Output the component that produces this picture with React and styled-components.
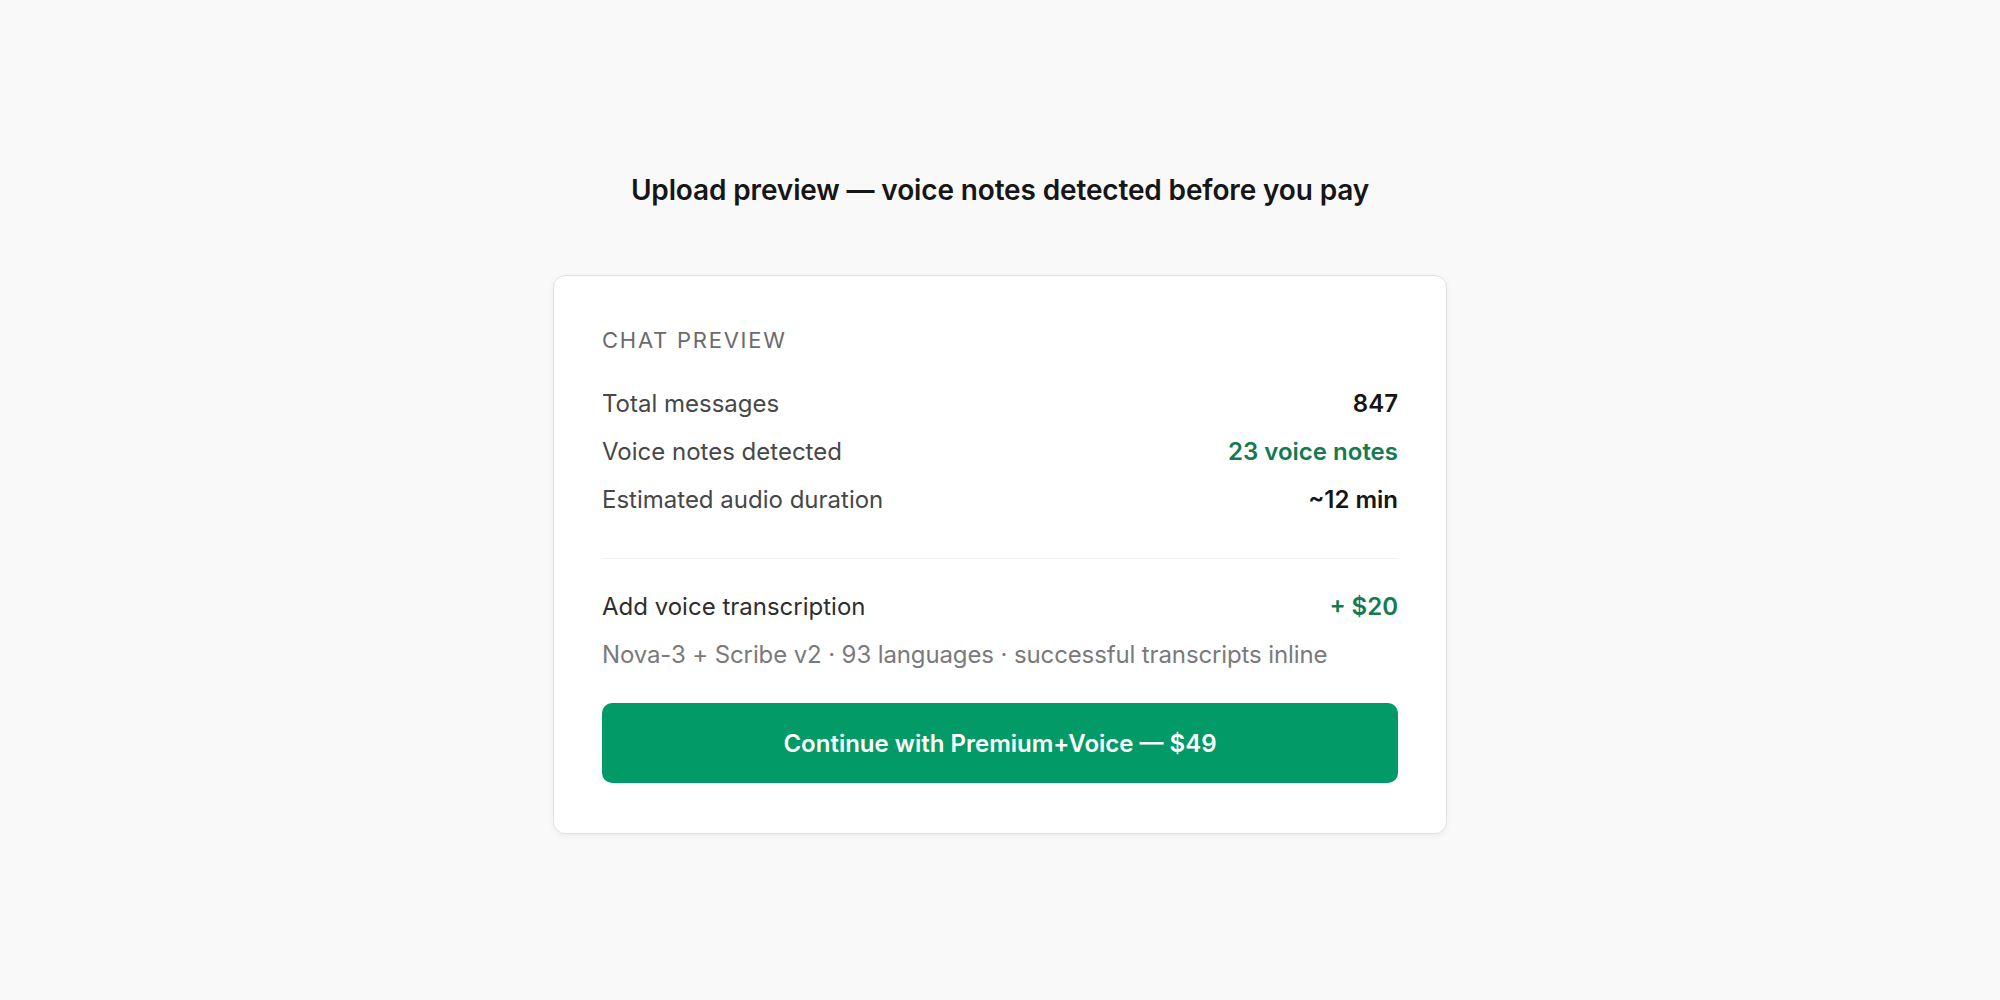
import React from "react";
import styled, { createGlobalStyle } from "styled-components";

const GlobalStyle = createGlobalStyle`
  html, body {
    margin: 0;
    padding: 0;
    background: #f9f9f9;
    font-family: Inter, "Noto Sans", "Liberation Sans", sans-serif;
    -webkit-font-smoothing: antialiased;
  }
`;

const Page = styled.main`
  min-height: 1000px;
  box-sizing: border-box;
  padding-top: 173px;
  display: flex;
  flex-direction: column;
  align-items: center;
`;

const Title = styled.h1`
  margin: 0 0 68px;
  font-size: 28px;
  line-height: 34px;
  font-weight: 600;
  color: #161616;
  letter-spacing: -0.005em;
`;

const Card = styled.section`
  width: 894px;
  box-sizing: border-box;
  background: #fff;
  border: 1px solid #e2e2e2;
  border-radius: 12px;
  box-shadow: 0 2px 6px rgba(0, 0, 0, 0.05);
  padding: 48px 48px 50px;
`;

const Eyebrow = styled.div`
  font-size: 22px;
  line-height: 33px;
  letter-spacing: 0.08em;
  text-transform: uppercase;
  color: #6b6b6b;
  margin-bottom: 29px;
`;

const Stats = styled.div`
  display: flex;
  flex-direction: column;
  gap: 12px;
  padding-bottom: 40px;
  border-bottom: 1px solid #f0f0f0;
`;

const Row = styled.div`
  display: flex;
  justify-content: space-between;
  align-items: baseline;
  font-size: 24px;
  line-height: 36px;
`;

const Label = styled.span`
  color: ${(p) => (p.strong ? "#2e2e2e" : "#474747")};
`;

const Value = styled.span`
  font-weight: 600;
  color: ${(p) => (p.accent ? "#157a52" : "#161616")};
`;

const Addon = styled.div`
  padding-top: 30px;
  display: flex;
  flex-direction: column;
  gap: 12px;
`;

const Note = styled.div`
  font-size: 24px;
  line-height: 36px;
  letter-spacing: -0.005em;
  color: #7a7a7a;
`;

const Button = styled.button`
  margin-top: 30px;
  width: 100%;
  height: 80px;
  border: none;
  border-radius: 10px;
  background: #029a66;
  color: #fff;
  font-family: inherit;
  font-size: 24px;
  font-weight: 600;
  cursor: pointer;
`;

const stats = [
  { label: "Total messages", value: "847" },
  { label: "Voice notes detected", value: "23 voice notes", accent: true },
  { label: "Estimated audio duration", value: "~12 min" },
];

export default function App() {
  return (
    <>
      <GlobalStyle />
      <Page>
        <Title>Upload preview — voice notes detected before you pay</Title>
        <Card>
          <Eyebrow>Chat preview</Eyebrow>
          <Stats>
            {stats.map((s) => (
              <Row key={s.label}>
                <Label>{s.label}</Label>
                <Value accent={s.accent}>{s.value}</Value>
              </Row>
            ))}
          </Stats>
          <Addon>
            <Row>
              <Label strong>Add voice transcription</Label>
              <Value accent>+ $20</Value>
            </Row>
            <Note>Nova-3 + Scribe v2 · 93 languages · successful transcripts inline</Note>
          </Addon>
          <Button>Continue with Premium+Voice — $49</Button>
        </Card>
      </Page>
    </>
  );
}
